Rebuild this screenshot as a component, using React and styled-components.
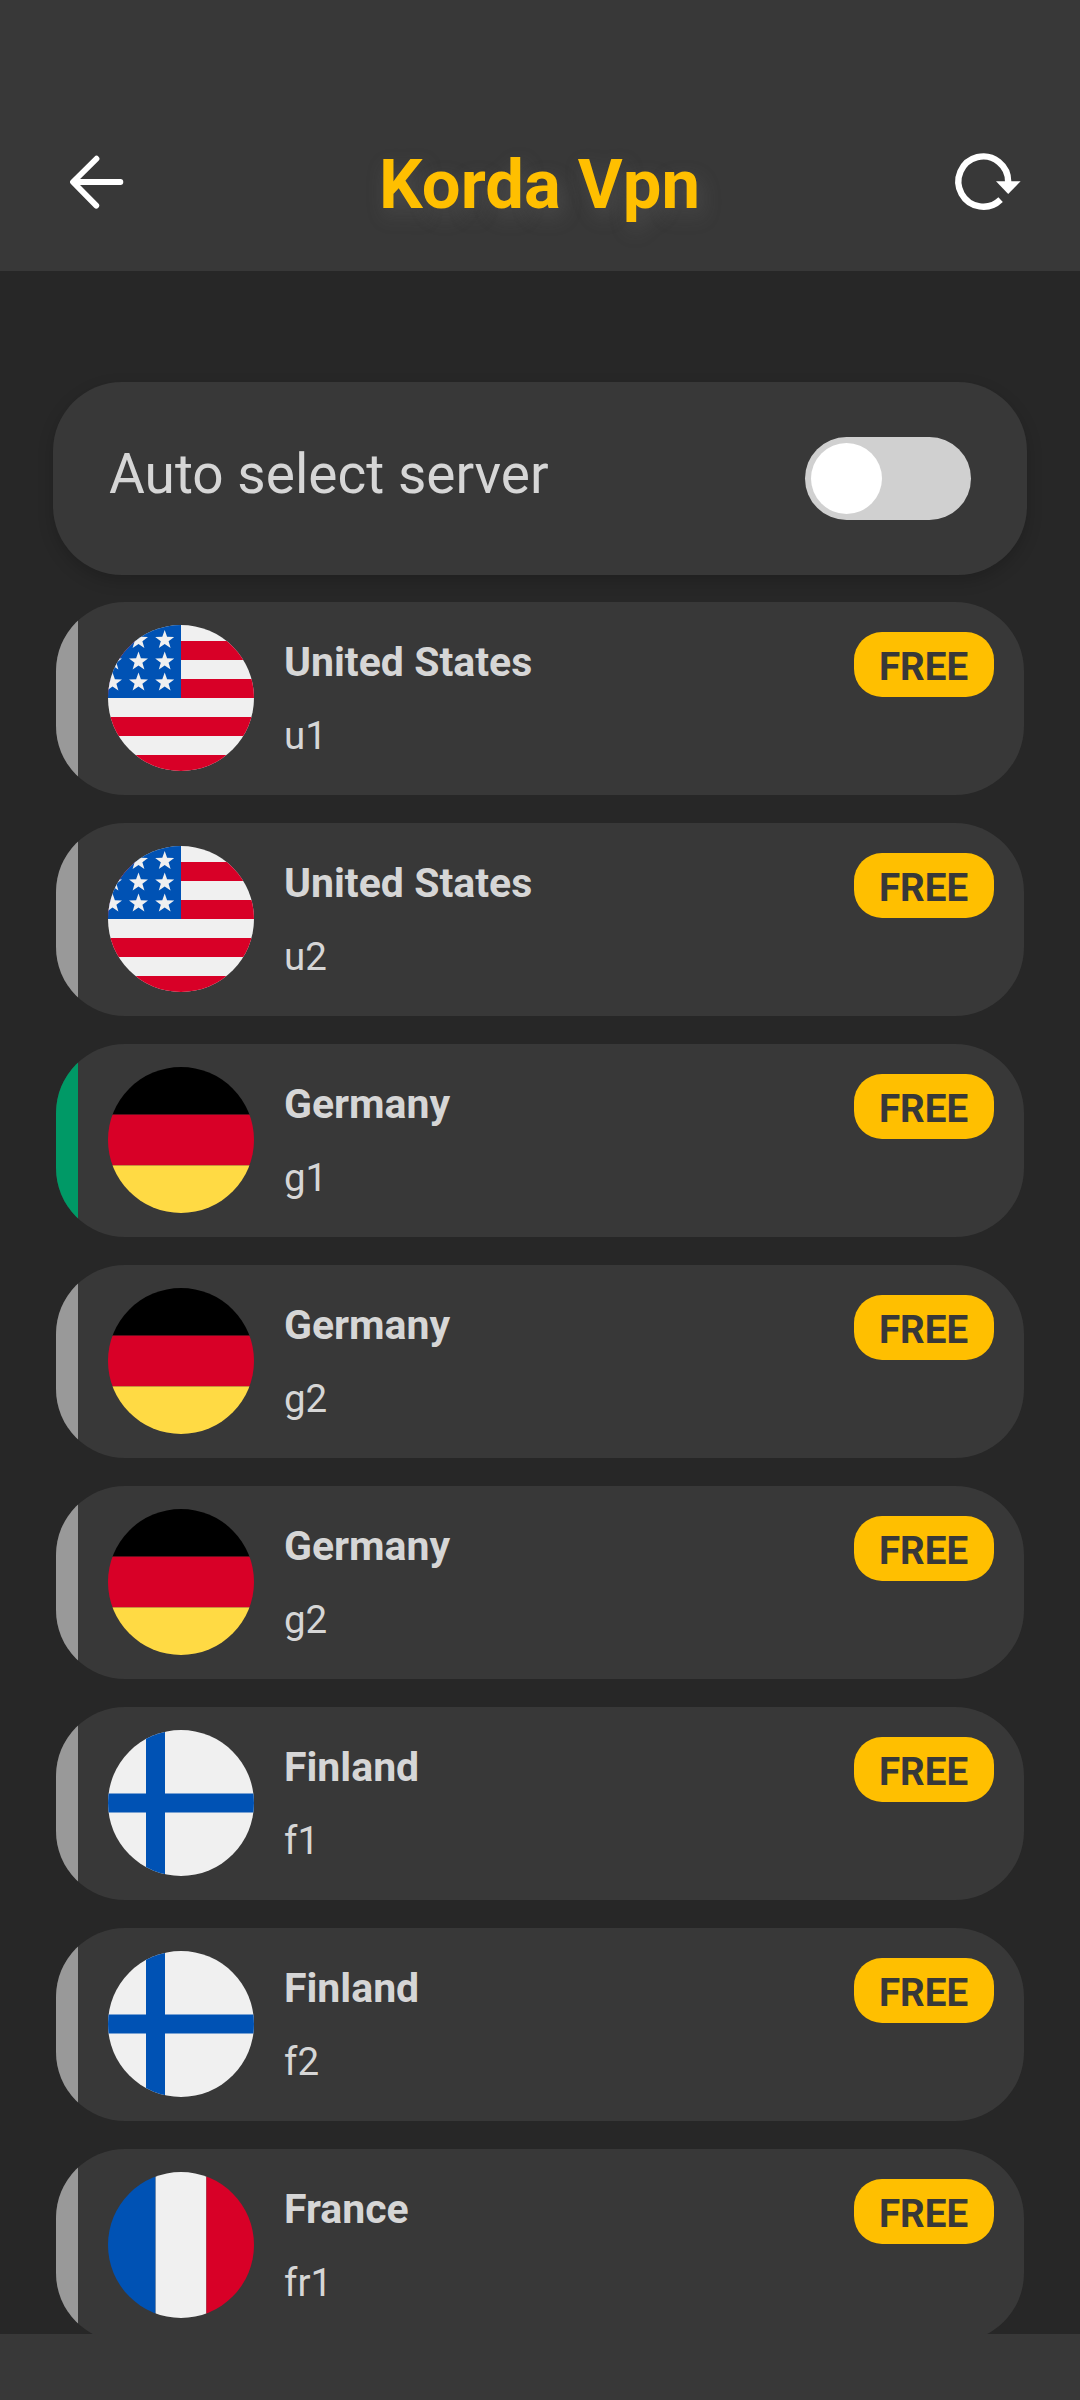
import React, { useState } from "react";
import styled, { createGlobalStyle } from "styled-components";

const GlobalStyle = createGlobalStyle`
  *, *::before, *::after { box-sizing: border-box; }
  html, body { margin: 0; padding: 0; background: #272727; }
  body { font-family: Roboto, "Liberation Sans", sans-serif; color: #d6d6d6; }
`;

const Screen = styled.div`
  display: flex;
  flex-direction: column;
  width: 1080px;
  height: 2400px;
  overflow: hidden;
  background: #272727;
`;

const Header = styled.header`
  display: flex;
  align-items: center;
  justify-content: space-between;
  flex: none;
  height: 271px;
  padding: 93px 57px 0 60px;
  background: #383838;
`;

const IconButton = styled.button`
  display: flex;
  align-items: center;
  justify-content: center;
  width: 72px;
  height: 72px;
  padding: 0;
  border: 0;
  background: transparent;
  color: #fff;
`;

const Title = styled.h1`
  margin: 5px 4px 0 0;
  font-size: 68.75px;
  line-height: 80px;
  font-weight: 700;
  color: #ffbf00;
  text-shadow: 4px 8px 20px rgba(140, 140, 140, 0.25);
`;

const Content = styled.main`
  display: flex;
  flex-direction: column;
  flex: 1;
  min-height: 0;
  overflow: hidden;
  padding: 111px 53px 0;
`;

const AutoCard = styled.section`
  display: flex;
  align-items: center;
  justify-content: space-between;
  flex: none;
  height: 193px;
  padding: 0 56px;
  border-radius: 69px;
  background: #383838;
  box-shadow: 0 6px 16px rgba(0, 0, 0, 0.18);
`;

const AutoLabel = styled.span`
  font-size: 55px;
  line-height: 64px;
  margin-top: -10px;
  color: #d6d6d6;
`;

const Toggle = styled.button`
  display: flex;
  align-items: center;
  justify-content: ${(p) => (p.$on ? "flex-end" : "flex-start")};
  width: 166px;
  height: 83px;
  padding: 0 6px;
  border: 0;
  border-radius: 42px;
  background: ${(p) => (p.$on ? "#009966" : "#d0d0d0")};
`;

const Knob = styled.span`
  width: 71px;
  height: 71px;
  border-radius: 50%;
  background: #fff;
`;

const ServerList = styled.ul`
  display: flex;
  flex-direction: column;
  gap: 28px;
  margin: 27px 3px 0;
  padding: 0;
  list-style: none;
`;

const ServerRow = styled.li`
  display: flex;
  flex: none;
  height: 193px;
  overflow: hidden;
  border-radius: 69px;
  background: #383838;
`;

const Status = styled.span`
  width: 22px;
  background: ${(p) => (p.$active ? "#009966" : "#999999")};
`;

const FlagIcon = styled.svg`
  flex: none;
  width: 146px;
  height: 146px;
  margin: 23px 30px 0 30px;
`;

const Details = styled.div`
  display: flex;
  flex-direction: column;
  flex: 1;
  padding-top: 36px;
`;

const Country = styled.span`
  font-size: 41px;
  line-height: 48px;
  font-weight: 700;
`;

const ServerName = styled.span`
  margin-top: 27px;
  font-size: 38.5px;
  line-height: 46px;
`;

const Badge = styled.span`
  display: flex;
  align-items: center;
  justify-content: center;
  width: 140px;
  height: 65px;
  margin: 30px 30px 0 0;
  padding: 4px 1px 0 0;
  border-radius: 28px;
  background: #ffbf00;
  color: #383838;
  font-size: 38.5px;
  line-height: 46px;
  font-weight: 700;
`;

const Footer = styled.footer`
  flex: none;
  height: 66px;
  background: #383838;
`;

const STAR = "0,-10 2.4,-3.2 9.5,-3.1 3.9,1.3 5.9,8.1 0,4.1 -5.9,8.1 -3.9,1.3 -9.5,-3.1 -2.4,-3.2";
const STARS = [
  [30.5, 15], [56.7, 15],
  [4.5, 36.5], [30.5, 36.5], [56.7, 36.5],
  [4.5, 57.5], [30.5, 57.5], [56.7, 57.5],
];

const flags = {
  us: (
    <>
      <rect width="146" height="146" fill="#f0f0f0" />
      {[16, 54, 92, 130].map((y) => (
        <rect key={y} y={y} width="146" height="19" fill="#d80027" />
      ))}
      <rect width="73" height="73" fill="#0052b4" />
      {STARS.map(([x, y]) => (
        <polygon key={`${x}-${y}`} points={STAR} transform={`translate(${x} ${y})`} fill="#f0f0f0" />
      ))}
    </>
  ),
  de: (
    <>
      <rect width="146" height="47.6" fill="#000" />
      <rect y="47.6" width="146" height="50.8" fill="#d80027" />
      <rect y="98.4" width="146" height="47.6" fill="#ffda44" />
    </>
  ),
  fi: (
    <>
      <rect width="146" height="146" fill="#f0f0f0" />
      <rect x="38" width="19" height="146" fill="#0052b4" />
      <rect y="63.5" width="146" height="19" fill="#0052b4" />
    </>
  ),
  fr: (
    <>
      <rect width="47.6" height="146" fill="#0052b4" />
      <rect x="47.6" width="50.8" height="146" fill="#f0f0f0" />
      <rect x="98.4" width="47.6" height="146" fill="#d80027" />
    </>
  ),
};

const servers = [
  { flag: "us", country: "United States", name: "u1" },
  { flag: "us", country: "United States", name: "u2" },
  { flag: "de", country: "Germany", name: "g1", active: true },
  { flag: "de", country: "Germany", name: "g2" },
  { flag: "de", country: "Germany", name: "g2" },
  { flag: "fi", country: "Finland", name: "f1" },
  { flag: "fi", country: "Finland", name: "f2" },
  { flag: "fr", country: "France", name: "fr1" },
];

function Flag({ code, id }) {
  return (
    <FlagIcon viewBox="0 0 146 146" aria-hidden="true">
      <clipPath id={id}>
        <circle cx="73" cy="73" r="73" />
      </clipPath>
      <g clipPath={`url(#${id})`}>{flags[code]}</g>
    </FlagIcon>
  );
}

function BackIcon() {
  return (
    <svg width="72" height="72" viewBox="0 0 72 72" fill="none" stroke="currentColor" strokeWidth="5.8" strokeLinecap="round" strokeLinejoin="round">
      <path d="M60.4 36H13.5M36.5 12.7L13 36L36.3 59.6" />
    </svg>
  );
}

function RefreshIcon() {
  return (
    <svg width="72" height="72" viewBox="0 0 72 72" fill="none">
      <path d="M49.6 53.6A24.9 25.1 0 1 1 57.2 36" stroke="currentColor" strokeWidth="6.4" />
      <path d="M45 35.2H69.6L57.2 48Z" fill="currentColor" />
    </svg>
  );
}

export default function App() {
  const [auto, setAuto] = useState(false);
  return (
    <>
      <GlobalStyle />
      <Screen>
        <Header>
          <IconButton aria-label="Back"><BackIcon /></IconButton>
          <Title>Korda Vpn</Title>
          <IconButton aria-label="Refresh"><RefreshIcon /></IconButton>
        </Header>
        <Content>
          <AutoCard>
            <AutoLabel>Auto select server</AutoLabel>
            <Toggle $on={auto} onClick={() => setAuto(!auto)} role="switch" aria-checked={auto} aria-label="Auto select server">
              <Knob />
            </Toggle>
          </AutoCard>
          <ServerList>
            {servers.map((s, i) => (
              <ServerRow key={i}>
                <Status $active={s.active} />
                <Flag code={s.flag} id={`flag-${i}`} />
                <Details>
                  <Country>{s.country}</Country>
                  <ServerName>{s.name}</ServerName>
                </Details>
                <Badge>FREE</Badge>
              </ServerRow>
            ))}
          </ServerList>
        </Content>
        <Footer />
      </Screen>
    </>
  );
}
